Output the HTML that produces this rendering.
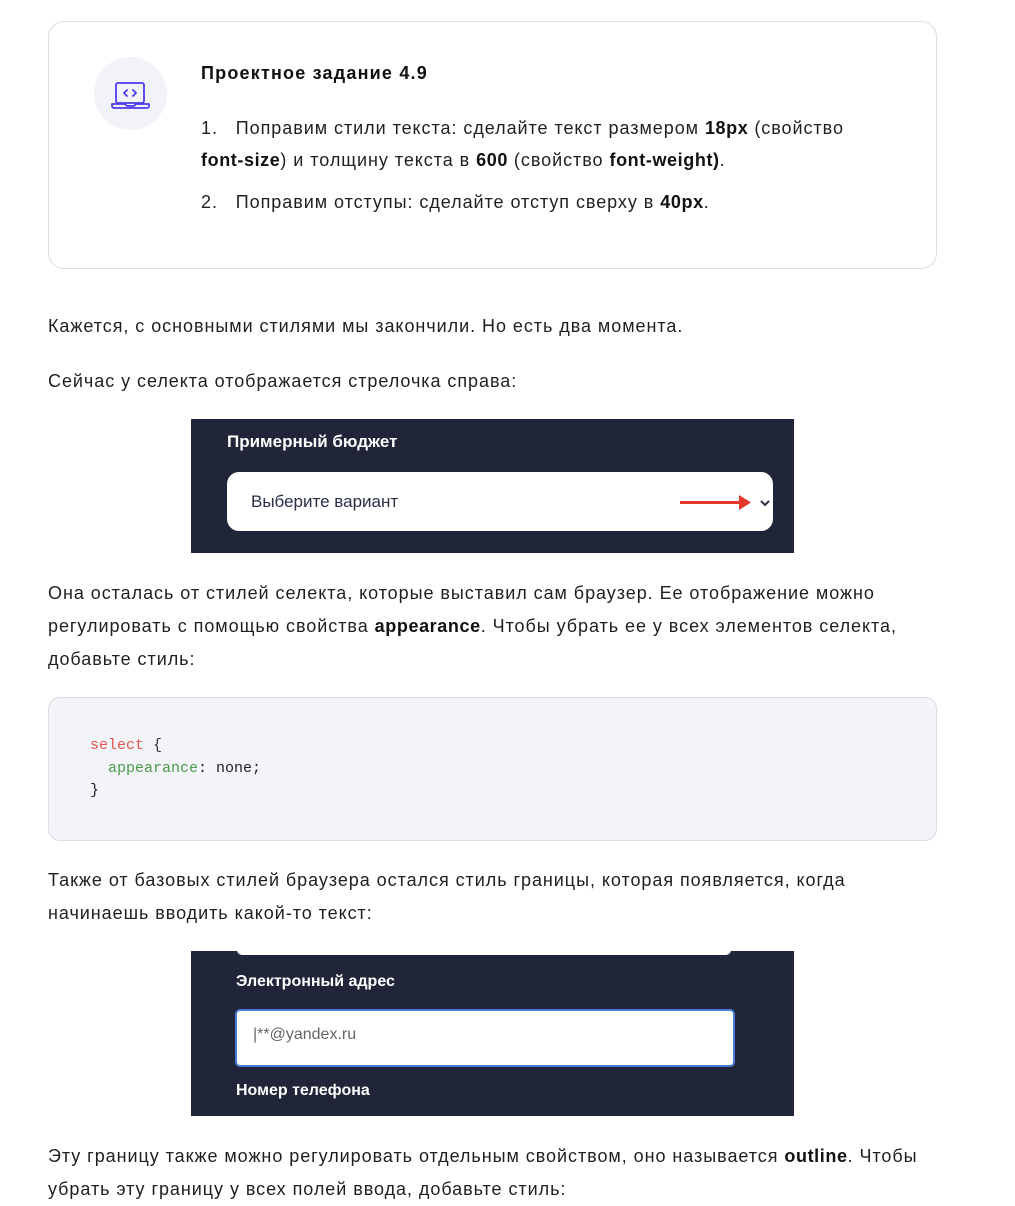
<!DOCTYPE html>
<html><head><meta charset="utf-8"><style>
body{margin:0;background:#fff;width:1015px;height:1206px;position:relative;font-family:"Liberation Sans",sans-serif;color:#1f1f1f;overflow:hidden}
.a{position:absolute}
p.t{position:absolute;left:48px;margin:0;font-size:18px;line-height:33px;width:950px;white-space:nowrap;letter-spacing:0.95px}
b{font-weight:bold;color:#111;letter-spacing:0.6px}
.card{left:48px;top:21px;width:887px;height:246px;border:1px solid #dcdde3;border-radius:16px}
.circ{left:94px;top:57px;width:73px;height:73px;border-radius:50%;background:#f2f3f8}
.dark{background:#202539;color:#fff;font-family:"Liberation Sans",sans-serif}
.code{left:48px;top:697px;width:887px;height:142px;border:1px solid #dcdde3;border-radius:12px;background:#f3f4f8;font-family:"Liberation Mono",monospace;font-size:15px;line-height:22.5px}
</style></head><body>
<div class="a card"></div>
<div class="a circ"><svg width="73" height="73" viewBox="0 0 73 73"><g fill="none" stroke="#4b3cf0" stroke-width="1.8" stroke-linejoin="round" stroke-linecap="round"><rect x="22" y="26" width="28" height="20" rx="2"/><path d="M18 47h13l2 2h7l2-2h13v2a2 2 0 0 1-2 2H20a2 2 0 0 1-2-2z"/><path d="M33 33l-3 3 3 3M39 33l3 3-3 3"/></g></svg></div>
<div class="a" style="left:201px;top:63px;font-size:18px;font-weight:bold;color:#111;letter-spacing:1.2px">Проектное задание 4.9</div>
<p class="t" style="left:201px;top:112px;line-height:32px">1.&nbsp;&nbsp; Поправим стили текста: сделайте текст размером <b>18px</b> (свойство<br><b>font-size</b>) и толщину текста в <b>600</b> (свойство <b>font-weight)</b>.</p>
<p class="t" style="left:201px;top:186px">2.&nbsp;&nbsp; Поправим отступы: сделайте отступ сверху в <b>40px</b>.</p>
<p class="t" style="top:310px">Кажется, с основными стилями мы закончили. Но есть два момента.</p>
<p class="t" style="top:365px">Сейчас у селекта отображается стрелочка справа:</p>
<div class="a dark" style="left:191px;top:419px;width:603px;height:134px">
<div class="a" style="left:36px;top:13px;font-size:17px;font-weight:bold">Примерный бюджет</div>
<div class="a" style="left:36px;top:53px;width:546px;height:59px;background:#fff;border-radius:12px"></div>
<div class="a" style="left:60px;top:73px;font-size:17px;color:#2a2f45">Выберите вариант</div>
<div class="a" style="left:489px;top:82px;width:62px;height:3px;background:#e5362a"></div>
<svg class="a" style="left:548px;top:76px" width="14" height="15"><path d="M0 0L12 7.5 0 15z" fill="#e5362a"/></svg>
<svg class="a" style="left:569px;top:80px" width="10" height="8"><path d="M1 2l4 4 4-4" fill="none" stroke="#2a2f45" stroke-width="2"/></svg>
</div>
<p class="t" style="top:577px">Она осталась от стилей селекта, которые выставил сам браузер. Ее отображение можно<br>регулировать с помощью свойства <b>appearance</b>. Чтобы убрать ее у всех элементов селекта,<br>добавьте стиль:</p>
<div class="a code"><div class="a" style="left:41px;top:37px"><span style="color:#e2574c">select</span> <span style="color:#333">{</span><br>&nbsp;&nbsp;<span style="color:#4a9a4a">appearance</span>: none;<br>}</div></div>
<p class="t" style="top:864px">Также от базовых стилей браузера остался стиль границы, которая появляется, когда<br>начинаешь вводить какой-то текст:</p>
<div class="a dark" style="left:191px;top:951px;width:603px;height:165px">
<div class="a" style="left:46px;top:-1px;width:494px;height:5px;background:#fff;border-radius:0 0 8px 8px"></div>
<div class="a" style="left:45px;top:22px;font-size:16px;font-weight:bold">Электронный адрес</div>
<div class="a" style="left:44px;top:58px;width:496px;height:54px;background:#fff;border:2px solid #4a7bd8;border-radius:5px"></div>
<div class="a" style="left:62px;top:75px;font-size:16px;color:#666">|**@yandex.ru</div>
<div class="a" style="left:45px;top:131px;font-size:16px;font-weight:bold">Номер телефона</div>
</div>
<p class="t" style="top:1140px">Эту границу также можно регулировать отдельным свойством, оно называется <b>outline</b>. Чтобы<br>убрать эту границу у всех полей ввода, добавьте стиль:</p>
</body></html>
